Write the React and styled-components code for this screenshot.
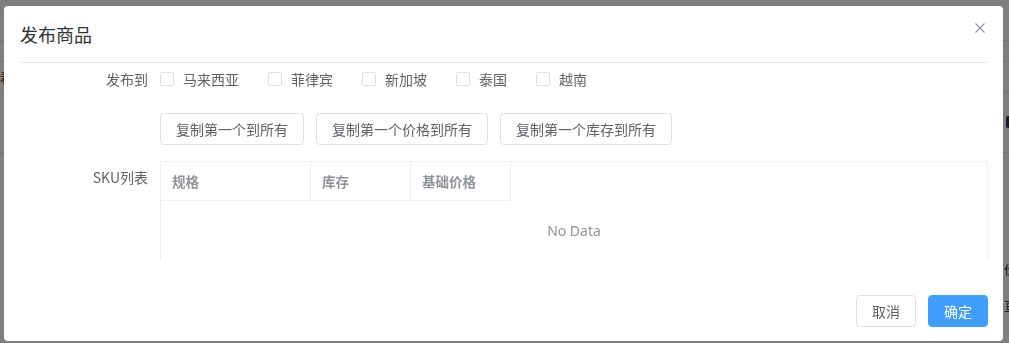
import React from 'react';
import styled, { createGlobalStyle } from 'styled-components';

const Global = createGlobalStyle`
  html, body { margin: 0; padding: 0; background: #fff; }
  body {
    font-family: "Noto Sans", "Noto Sans CJK SC", sans-serif;
    color: #606266;
    overflow: hidden;
  }
  * { box-sizing: border-box; }
`;

/* ---------- background page (under the overlay) ---------- */
const Page = styled.div`
  width: 1009px;
  height: 343px;
  display: flex;
  flex-direction: column;
`;

const BgRow = styled.div`
  height: ${p => p.$h}px;
  display: grid;
  grid-template-columns: 1004px 1fr;
  align-items: center;
  border-bottom: ${p => (p.$line ? '1px solid #e4e6ea' : 'none')};
  font-size: 13px;
  color: #303133;
  white-space: nowrap;
  overflow: hidden;
`;

const BgCell = styled.div`
  overflow: hidden;
`;

const BgIcon = styled.span`
  display: inline-block;
  width: 12px;
  height: 12px;
  background: #2b3a55;
  border-radius: 2px;
  margin-left: 2px;
`;

/* ---------- dialog ---------- */
const Overlay = styled.div`
  position: fixed;
  inset: 0;
  background: rgba(0, 0, 0, 0.5);
  display: flex;
  align-items: flex-start;
  padding: 6px 0 0 4px;
`;

const Dialog = styled.div`
  width: 999px;
  height: 335px;
  background: #fff;
  border-radius: 4px;
  display: flex;
  flex-direction: column;
`;

const Header = styled.div`
  margin: 0 15px 0 16px;
  padding: 16px 0;
  border-bottom: 1px solid #e8e8e8;
  display: flex;
  align-items: flex-start;
  justify-content: space-between;
`;

const Title = styled.div`
  font-size: 18px;
  line-height: 24px;
  color: #303133;
  font-family: "Noto Sans CJK SC", sans-serif;
`;

const CloseBtn = styled.button`
  border: none;
  background: transparent;
  padding: 0;
  margin: 1px 3px 0 0;
  width: 10px;
  height: 10px;
  display: flex;
  cursor: pointer;
`;

const Body = styled.div`
  padding: 0 15px 0 16px;
  display: flex;
  flex-direction: column;
`;

const FormRow = styled.div`
  display: flex;
  align-items: flex-start;
  margin-top: ${p => p.$mt || 0}px;
`;

const Label = styled.div`
  width: 140px;
  flex: none;
  padding-right: 12px;
  text-align: right;
  font-size: 14px;
  line-height: 32px;
  color: #606266;
  font-family: "Noto Sans CJK SC", sans-serif;
`;

const Content = styled.div`
  flex: 1;
  min-width: 0;
  display: flex;
  align-items: center;
  min-height: 32px;
  gap: ${p => p.$gap || 0}px;
`;

const CheckItem = styled.label`
  display: inline-flex;
  align-items: center;
  margin-right: 29px;
  font-size: 14px;
  color: #606266;
  font-family: "Noto Sans CJK SC", sans-serif;
  cursor: pointer;
`;

const Box = styled.span`
  width: 14px;
  height: 14px;
  border: 1px solid #dcdfe6;
  border-radius: 2px;
  background: #fff;
  margin-right: 9px;
  flex: none;
`;

const Button = styled.button`
  height: 32px;
  padding: 0 15px;
  border-radius: 4px;
  border: 1px solid ${p => (p.$primary ? '#409eff' : '#dcdfe6')};
  background: ${p => (p.$primary ? '#409eff' : '#fff')};
  color: ${p => (p.$primary ? '#fff' : '#606266')};
  font-size: 14px;
  font-family: "Noto Sans CJK SC", sans-serif;
  line-height: 30px;
  white-space: nowrap;
  cursor: pointer;
`;

const TableWrap = styled.div`
  flex: 1;
  height: 100px;
  overflow: hidden;
  border: 1px solid #ebeef5;
  border-bottom: none;
  display: flex;
  flex-direction: column;
`;

const HeadRow = styled.div`
  display: flex;
`;

const HeadCell = styled.div`
  width: ${p => p.$w}px;
  height: 39px;
  padding-left: 11px;
  display: flex;
  align-items: center;
  border-right: 1px solid #ebeef5;
  border-bottom: 1px solid #ebeef5;
  font-size: 13.5px;
  font-weight: bold;
  color: #909399;
  font-family: "Noto Sans CJK SC", sans-serif;
`;

const Empty = styled.div`
  height: 60px;
  line-height: 60px;
  text-align: center;
  font-size: 14px;
  color: #909399;
`;

const Footer = styled.div`
  margin-top: 34px;
  padding: 0 15px 0 16px;
  display: flex;
  justify-content: flex-end;
  gap: 12px;
`;

const countries = ['马来西亚', '菲律宾', '新加坡', '泰国', '越南'];

export default function App() {
  return (
    <>
      <Global />
      <Page>
        <BgRow $h={41} $line><BgCell /><BgCell /></BgRow>
        <BgRow $h={21} $line><BgCell /><BgCell /></BgRow>
        <BgRow $h={31} $line><BgCell>看</BgCell><BgCell /></BgRow>
        <BgRow $h={60} $line><BgCell /><BgCell><BgIcon /></BgCell></BgRow>
        <BgRow $h={97}><BgCell /><BgCell /></BgRow>
        <BgRow $h={37}><BgCell /><BgCell>价</BgCell></BgRow>
        <BgRow $h={36}><BgCell /><BgCell>亘</BgCell></BgRow>
      </Page>
      <Overlay>
        <Dialog>
          <Header>
            <Title>发布商品</Title>
            <CloseBtn aria-label="close">
              <svg width="10" height="10" viewBox="0 0 10 10">
                <path d="M0.5 0.5 L9.5 9.5 M9.5 0.5 L0.5 9.5" stroke="#909399" strokeWidth="1.1" fill="none" />
              </svg>
            </CloseBtn>
          </Header>
          <Body>
            <FormRow>
              <Label>发布到</Label>
              <Content>
                {countries.map(c => (
                  <CheckItem key={c}>
                    <Box />
                    {c}
                  </CheckItem>
                ))}
              </Content>
            </FormRow>
            <FormRow $mt={18}>
              <Label />
              <Content $gap={12}>
                <Button>复制第一个到所有</Button>
                <Button>复制第一个价格到所有</Button>
                <Button>复制第一个库存到所有</Button>
              </Content>
            </FormRow>
            <FormRow $mt={16}>
              <Label>SKU列表</Label>
              <TableWrap>
                <HeadRow>
                  <HeadCell $w={150}>规格</HeadCell>
                  <HeadCell $w={100}>库存</HeadCell>
                  <HeadCell $w={100}>基础价格</HeadCell>
                </HeadRow>
                <Empty>No Data</Empty>
              </TableWrap>
            </FormRow>
          </Body>
          <Footer>
            <Button>取消</Button>
            <Button $primary>确定</Button>
          </Footer>
        </Dialog>
      </Overlay>
    </>
  );
}
